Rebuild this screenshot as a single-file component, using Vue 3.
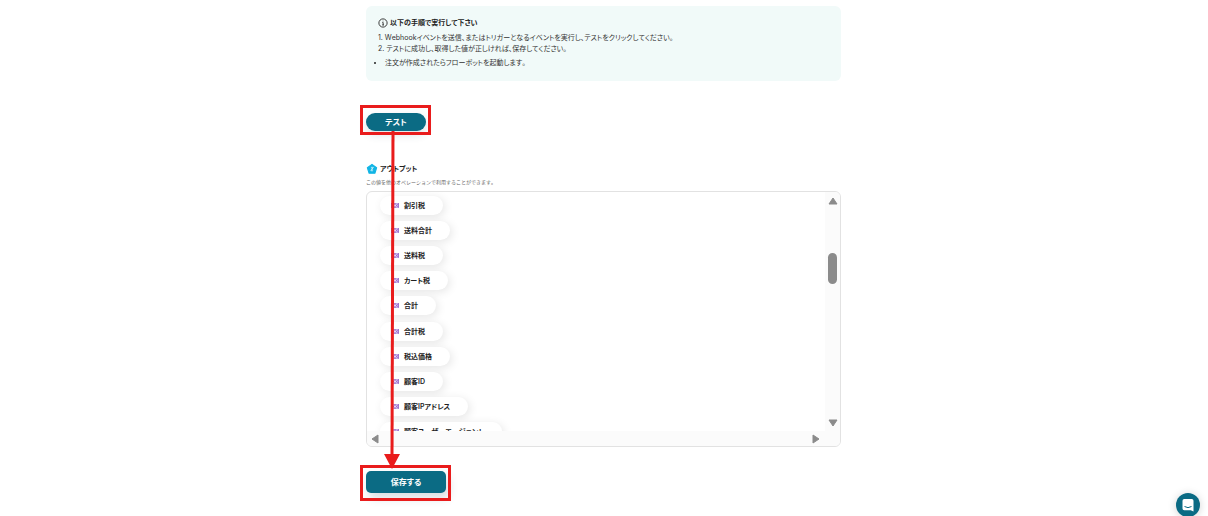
<script setup>
const fields = ['割引税', '送料合計', '送料税', 'カート税', '合計', '合計税', '税込価格', '顧客ID', '顧客IPアドレス', '顧客ユーザーエージェント']
</script>

<template>
  <main class="page">
    <section class="notice">
      <h2 class="notice-title">
        <svg class="info" viewBox="0 0 16 16" aria-hidden="true">
          <circle cx="8" cy="8" r="6.6" />
          <path d="M7 7.2H8.2V11.2M6.8 11.2H9.6M8 4.4V5.4" />
        </svg>
        以下の手順で実行して下さい
      </h2>
      <ol class="steps">
        <li>1. Webhookイベントを送信、またはトリガーとなるイベントを実行し、テストをクリックしてください。</li>
        <li>2. テストに成功し、取得した値が正しければ、保存してください。</li>
      </ol>
      <ul class="points">
        <li>注文が作成されたらフローボットを起動します。</li>
      </ul>
    </section>

    <div class="action test-action">
      <button class="btn pill" type="button">テスト</button>
      <span class="mark"></span>
    </div>

    <section class="output">
      <h2 class="output-title">
        <svg class="badge" viewBox="0 0 22 22" aria-hidden="true">
          <path d="M11 2.5L19.5 8.8L16.3 18.8H5.7L2.5 8.8Z" />
          <path class="glyph" d="M9 8H13.5L8.8 14.2H13M9 11.1H13" />
        </svg>
        アウトプット
      </h2>
      <p class="output-note">この値を他のオペレーションで利用することができます。</p>
      <div class="panel">
        <div class="view">
          <ul class="chips">
            <li v-for="field in fields" :key="field" class="chip">
              <svg class="tag" viewBox="0 0 16 10" aria-hidden="true">
                <rect x="1" y="1" width="14" height="8" />
                <path d="M1 1L8 9L15 1M1 9L8 1L15 9" />
              </svg>
              {{ field }}
            </li>
          </ul>
        </div>
        <div class="track vertical" aria-hidden="true">
          <svg class="arrow" viewBox="0 0 10 8"><path d="M5 1L9 7H1Z" /></svg>
          <span class="thumb"></span>
          <svg class="arrow end" viewBox="0 0 10 8"><path d="M5 7L9 1H1Z" /></svg>
        </div>
        <div class="track horizontal" aria-hidden="true">
          <svg class="arrow side" viewBox="0 0 8 10"><path d="M1 5L7 1V9Z" /></svg>
          <svg class="arrow side" viewBox="0 0 8 10"><path d="M7 5L1 1V9Z" /></svg>
        </div>
        <div class="track"></div>
      </div>
    </section>

    <div class="action save-action">
      <button class="btn save" type="button">保存する</button>
      <span class="mark"></span>
    </div>

    <svg class="pointer" viewBox="0 0 16 338" aria-hidden="true">
      <path class="line" d="M9 0L8 326" />
      <path class="head" d="M0 323H16L8 338Z" />
    </svg>
  </main>

  <button class="chat" type="button" aria-label="チャットを開く">
    <svg viewBox="0 0 24 24" aria-hidden="true">
      <path class="bubble" d="M8.2 6H15.8Q17.5 6 17.5 7.7V18.5L14.8 17.2H8.2Q6.5 17.2 6.5 15.5V7.7Q6.5 6 8.2 6Z" />
      <path class="smile" d="M8.5 13.5Q12 15.8 15.5 13.5" />
    </svg>
  </button>
</template>

<style>
html {
  background: #fff;
}
</style>

<style scoped>
.page {
  position: relative;
  max-width: 475px;
  margin: 0 auto;
  padding: 6px 1px 16px 0;
  font-family: Inter, "Noto Sans CJK JP", sans-serif;
  font-feature-settings: "palt";
  font-kerning: none;
  font-size: 7px;
  line-height: 11px;
  color: #222;
}
h2, p, ol, ul {
  margin: 0;
  padding: 0;
}
ol, ul {
  list-style: none;
}
.notice {
  padding: 11px 12px 13px;
  border-radius: 6px;
  background: #f1faf9;
}
.notice-title, .output-title {
  display: flex;
  align-items: center;
  font-size: 7px;
  line-height: 12px;
  font-weight: 700;
}
.notice-title {
  gap: 2px;
}
.info {
  width: 10px;
  height: 10px;
  fill: none;
  stroke: #222;
  stroke-width: 1.4;
}
.steps {
  margin-top: 3px;
  color: #333;
}
.points {
  margin-top: 3px;
  color: #333;
}
.points li {
  display: flex;
  align-items: center;
  gap: 9px;
  margin-left: -4px;
}
.points li::before {
  content: "";
  width: 2px;
  height: 2px;
  border-radius: 1px;
  background: #222;
}
.action {
  position: relative;
  display: flex;
}
.test-action {
  margin-top: 32px;
}
.btn {
  padding: 0;
  border: 0;
  background: #0b6b84;
  color: #fff;
  font: inherit;
  font-weight: 700;
  font-size: 8px;
  cursor: pointer;
}
.pill {
  width: 60px;
  height: 18px;
  border-radius: 9px;
  box-shadow: 0 4px 8px rgba(60, 80, 100, 0.16);
}
.save {
  width: 80px;
  height: 22px;
  border-radius: 5px;
  box-shadow: 3px 5px 10px rgba(60, 80, 100, 0.2);
}
.mark {
  position: absolute;
  border: 3px solid #e91c1c;
  pointer-events: none;
}
.test-action .mark {
  left: -6px;
  top: -8px;
  width: 65px;
  height: 24px;
}
.save-action .mark {
  left: -6px;
  top: -6px;
  width: 85px;
  height: 30px;
}
.output {
  margin-top: 32px;
}
.output-title {
  gap: 2px;
}
.badge {
  width: 12px;
  height: 12px;
  fill: #12b5e5;
  stroke: #12b5e5;
  stroke-width: 2;
  stroke-linejoin: round;
}
.badge .glyph {
  fill: none;
  stroke: #e8fbff;
  stroke-width: 1.3;
}
.output-note {
  margin-top: 2px;
  font-size: 5px;
  font-feature-settings: normal;
  line-height: 10px;
  color: #666;
}
.panel {
  display: grid;
  grid-template-columns: 1fr 15px;
  grid-template-rows: 239px 15px;
  margin-top: 4px;
  border: 1px solid #e2e2e2;
  border-radius: 6px;
  overflow: hidden;
}
.view {
  overflow: hidden;
  padding: 4px 13px 0;
}
.chips {
  display: flex;
  flex-direction: column;
  justify-content: space-between;
  align-items: flex-start;
  height: 245px;
}
.chip {
  display: flex;
  align-items: center;
  gap: 5px;
  height: 19px;
  padding: 0 18px 0 11px;
  border-radius: 10px;
  background: #fff;
  box-shadow: 2px 2px 10px rgba(0, 0, 0, 0.1);
  font-weight: 600;
  white-space: nowrap;
}
.tag {
  width: 8px;
  height: 5px;
  fill: #e6d8f8;
  stroke: #8856c4;
  stroke-width: 1.5;
}
.track {
  background: #fbfbfb;
}
.vertical {
  display: flex;
  flex-direction: column;
  align-items: center;
  padding: 5px 0 4px;
}
.arrow {
  width: 10px;
  height: 8px;
  fill: #8b8b8b;
  stroke: #8b8b8b;
  stroke-linejoin: round;
}
.thumb {
  width: 9px;
  height: 31px;
  margin-top: 48px;
  border-radius: 5px;
  background: #8b8b8b;
}
.end {
  margin-top: auto;
}
.horizontal {
  display: flex;
  justify-content: space-between;
  align-items: center;
  padding: 0 5px 0 4px;
}
.side {
  width: 8px;
  height: 10px;
}
.save-action {
  margin-top: 24px;
}
.pointer {
  position: absolute;
  left: 18px;
  top: 131px;
  width: 16px;
  height: 338px;
}
.pointer .line {
  fill: none;
  stroke: #e91c1c;
  stroke-width: 3;
}
.pointer .head {
  fill: #e91c1c;
}
.chat {
  position: fixed;
  right: 8px;
  bottom: -1px;
  width: 24px;
  height: 24px;
  padding: 0;
  border: 0;
  border-radius: 50%;
  background: #0b6b84;
  box-shadow: 0 1px 8px rgba(0, 0, 0, 0.18);
  cursor: pointer;
}
.chat svg {
  display: block;
  width: 24px;
  height: 24px;
}
.bubble {
  fill: #fff;
}
.smile {
  fill: none;
  stroke: #0b6b84;
}
</style>
